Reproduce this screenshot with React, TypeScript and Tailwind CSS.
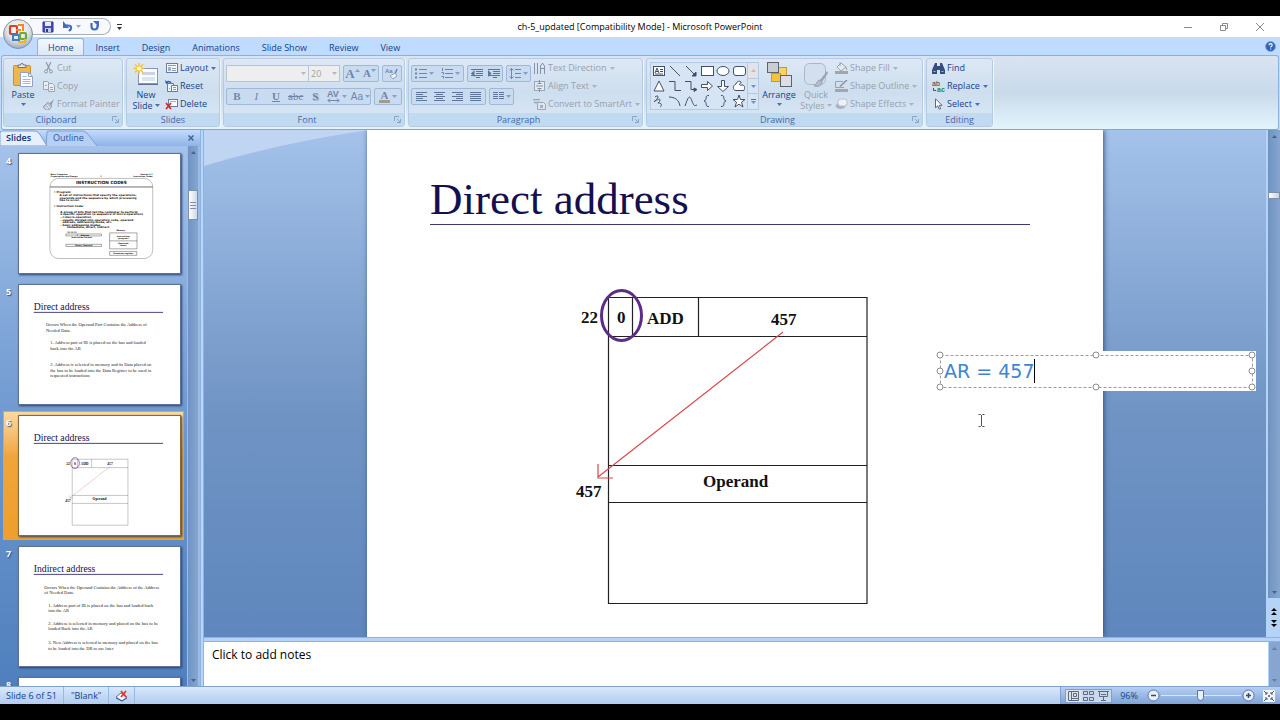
import type { ReactNode } from "react";
import clsx from "clsx";

const ui = "font-['Open_Sans','Noto_Sans',sans-serif]";

function Svg({ w, h, className, children }: { w: number; h: number; className?: string; children: ReactNode }) {
  return (
    <svg width={w} height={h} viewBox={`0 0 ${w} ${h}`} fill="none" className={clsx("shrink-0", className)} aria-hidden="true">
      {children}
    </svg>
  );
}

function Caret({ className }: { className?: string }) {
  return (
    <Svg w={5} h={3} className={clsx("opacity-70", className)}>
      <path d="M0 0h5L2.500 3z" fill="currentColor" />
    </Svg>
  );
}

/* ---------- title bar ---------- */

function OfficeButton() {
  return (
    <button aria-label="Office" className="absolute top-[2px] left-[2px] z-10 size-8">
      <Svg w={32} h={32}>
        <defs>
          <radialGradient id="orb" cx="50%" cy="35%" r="65%">
            <stop offset="0" stopColor="#ffffff" />
            <stop offset="0.6" stopColor="#dfe3ea" />
            <stop offset="1" stopColor="#9aa8bd" />
          </radialGradient>
        </defs>
        <circle cx="16" cy="16" r="14.500" fill="url(#orb)" stroke="#8493ab" />
        <rect x="8" y="8" width="7" height="8" rx="1" stroke="#d8431f" strokeWidth="2.200" />
        <path d="M16 7h5v6M14 12h5" stroke="#f08a24" strokeWidth="2" />
        <rect x="11" y="17" width="6" height="5" stroke="#3d7fc9" strokeWidth="2" />
        <rect x="18" y="15" width="6" height="6" rx="1" stroke="#6fa832" strokeWidth="2.200" />
        <path d="M16 24h7v-3" stroke="#f3b21b" strokeWidth="2" />
      </Svg>
    </button>
  );
}

function TitleBar() {
  return (
    <header className="grid h-[21px] grid-cols-[1fr_auto_1fr] items-center bg-white">
      <div className="flex items-center gap-[6px] pl-[30px] text-[#2a3a63]">
        <div className="flex h-[17px] items-center gap-2 rounded-r-full border border-l-0 border-[#a9adb5] bg-[#f7f9fc] pr-[10px] pl-3">
          <button aria-label="Save">
            <Svg w={12} h={12}>
              <path d="M1 1h10v10H1z" fill="#4250b5" stroke="#2c3590" />
              <path d="M3 1h6v4H3z" fill="#e6ecfa" />
              <path d="M3 7h6v4H3z" fill="#c2cbe8" />
              <path d="M4 8h2v3H4z" fill="#2c3590" />
            </Svg>
          </button>
          <button aria-label="Undo" className="flex items-center gap-[3px]">
            <Svg w={11} h={11}>
              <path d="M3 4.500h3c4 0 4 3 1 5.500" stroke="#3e6cc8" strokeWidth="2.200" />
              <path d="M1 0v7h6z" fill="#3e6cc8" />
            </Svg>
            <Caret className="text-[#6a86b8]" />
          </button>
          <button aria-label="Repeat">
            <Svg w={11} h={11}>
              <path d="M2.500 2v3.500a3 3 0 0 0 6 0V4" stroke="#3e6cc8" strokeWidth="2.200" />
              <path d="M4 0h6v6z" fill="#3e6cc8" />
            </Svg>
          </button>
        </div>
        <button aria-label="Customize Quick Access Toolbar">
          <Svg w={5} h={6}>
            <path d="M0 0h5v1H0zM0 3h5L2.500 6z" fill="#333" />
          </Svg>
        </button>
      </div>
      <h1 className="text-[9px] text-black">ch-5_updated [Compatibility Mode] - Microsoft PowerPoint</h1>
      <div className="flex items-center justify-end gap-[26px] pr-[15px] text-[#8a8a8a]">
        <button aria-label="Minimize">
          <Svg w={10} h={10}>
            <path d="M1 5.500h8" stroke="currentColor" />
          </Svg>
        </button>
        <button aria-label="Restore">
          <Svg w={10} h={10}>
            <path d="M1.500 3.500h5v5h-5zM3.500 3V1.500h5v5H7" stroke="currentColor" />
          </Svg>
        </button>
        <button aria-label="Close">
          <Svg w={10} h={10}>
            <path d="M1 1l8 8M9 1L1 9" stroke="currentColor" />
          </Svg>
        </button>
      </div>
    </header>
  );
}

const tabs = ["Home", "Insert", "Design", "Animations", "Slide Show", "Review", "View"];

function RibbonTabs() {
  return (
    <nav className="flex h-[18px] items-end bg-[#bfdbff] pr-1 pl-[37px] text-[9px] text-[#15428b]">
      {tabs.map((tab, i) => (
        <button
          key={tab}
          className={clsx(
            "h-[17px] rounded-t-[3px] border border-b-0 px-[10px] leading-[17px]",
            i === 0 ? "border-[#8db2e3] bg-linear-to-b from-[#f4f9ff] to-[#dce8f6]" : "border-transparent",
          )}
        >
          {tab}
        </button>
      ))}
      <button aria-label="Help" className="ml-auto self-center">
        <Svg w={11} h={11}>
          <circle cx="5.500" cy="5.500" r="5" fill="#2f62b5" stroke="#86a8dc" />
          <path d="M4 4.200c0-2 3.200-2 3.200 0 0 1.100-1.500 1-1.500 2.200M5.700 7.500v1" stroke="#fff" strokeWidth="1.200" />
        </Svg>
      </button>
    </nav>
  );
}

/* ---------- ribbon ---------- */

function Group({ label, launcher, className, children }: { label: string; launcher?: boolean; className?: string; children: ReactNode }) {
  return (
    <section
      aria-label={label}
      className={clsx(
        "flex h-[69px] shrink-0 flex-col overflow-hidden rounded-[3px] border border-[#b5cbe3] bg-linear-to-b from-[#dde8f5] via-[#cddeee] to-[#dbe9f8] shadow-[1px_0_0_#eef5fd]",
        className,
      )}
    >
      <div className="flex h-[54px]">{children}</div>
      <div className={clsx("relative flex-1 bg-[#c1d9f1] text-center text-[9px] leading-[13px] text-[#3e6aaa]", launcher && "pr-[14px]")}>
        {label}
        {launcher && (
          <button aria-label={`${label} options`} className="absolute top-[3px] right-[3px] text-[#8ba5c8]">
            <Svg w={7} h={7}>
              <path d="M.5 5V.5H5M3 3l3 3M6.500 3v3.500H3" stroke="currentColor" />
            </Svg>
          </button>
        )}
      </div>
    </section>
  );
}

function BigButton({ icon, lines, caret, disabled, className }: { icon: ReactNode; lines: string[]; caret: "below" | "inline"; disabled?: boolean; className?: string }) {
  return (
    <button
      disabled={disabled}
      className={clsx("flex shrink-0 flex-col items-center pt-[3px] text-[9px] leading-[11px]", disabled ? "text-[#98a1ac]" : "text-[#15428b]", className)}
    >
      <span className="mb-px flex h-[26px] items-center">{icon}</span>
      {lines.map((line, i) => (
        <span key={line} className="flex items-center gap-[2px]">
          {line}
          {caret === "inline" && i === lines.length - 1 && <Caret />}
        </span>
      ))}
      {caret === "below" && <Caret className="mt-[3px]" />}
    </button>
  );
}

function RowButton({ icon, label, caret, disabled }: { icon: ReactNode; label: string; caret?: boolean; disabled?: boolean }) {
  return (
    <button
      disabled={disabled}
      className={clsx("flex h-[18px] items-center gap-[2px] text-[9px] whitespace-nowrap", disabled ? "text-[#98a1ac]" : "text-[#15428b]")}
    >
      <span className="flex w-[13px] shrink-0 justify-center">{icon}</span>
      {label}
      {caret && <Caret className="ml-px" />}
    </button>
  );
}

function Rows({ className, children }: { className?: string; children: ReactNode }) {
  return <div className={clsx("flex flex-col items-start", className)}>{children}</div>;
}

function Tools({ className, children }: { className?: string; children: ReactNode }) {
  return (
    <div className={clsx("flex h-[17px] items-center justify-around rounded-[2px] border border-[#9fb8d8] bg-[#c9dbf0] text-[#7186a6]", className)}>
      {children}
    </div>
  );
}

function Tool({ label, children }: { label: string; children: ReactNode }) {
  return (
    <button disabled aria-label={label} className="flex h-full flex-1 items-center justify-center gap-[2px] font-['Liberation_Serif',serif] text-[11px] leading-none font-bold">
      {children}
    </button>
  );
}

function ClipboardGroup() {
  return (
    <Group label="Clipboard" launcher className="w-[120px]">
      <BigButton
        className="w-[38px]"
        lines={["Paste"]}
        caret="below"
        icon={
          <Svg w={22} h={26}>
            <rect x="1.500" y="3.500" width="17" height="20" rx="1" fill="#f0b64c" stroke="#c98f2e" />
            <path d="M6 5.500V3h2.500a1.500 1.500 0 0 1 3 0H14v2.500z" fill="#e3e6ea" stroke="#6d7480" />
            <path d="M8.500 10.500h8l4 4v10h-12z" fill="#fdfdff" stroke="#8fa3c4" />
            <path d="M16.500 10.500v4h4" stroke="#8fa3c4" />
            <path d="M10.500 14.500h4M10.500 17.500h8M10.500 19.500h8M10.500 21.500h8" stroke="#a9b7cf" />
          </Svg>
        }
      />
      <Rows>
        <RowButton
          disabled
          label="Cut"
          icon={
            <Svg w={9} h={12}>
              <path d="M2 0l4 8M7 0L3 8" stroke="#8d99a8" strokeWidth="1.200" />
              <circle cx="2" cy="9.500" r="1.500" stroke="#8d99a8" />
              <circle cx="7" cy="9.500" r="1.500" stroke="#8d99a8" />
            </Svg>
          }
        />
        <RowButton
          disabled
          label="Copy"
          icon={
            <Svg w={12} h={11}>
              <path d="M.5.5h4l2 2v6h-6z" fill="#e9eef5" stroke="#9aa6b6" />
              <path d="M5.500 2.500h4l2 2v6h-6z" fill="#e9eef5" stroke="#9aa6b6" />
              <path d="M7 6.500h3M7 8.500h3M2 4.500h2" stroke="#9aa6b6" />
            </Svg>
          }
        />
        <RowButton
          disabled
          label="Format Painter"
          icon={
            <Svg w={12} h={11}>
              <path d="M11 0L6 5l2 2z" fill="#8b97a6" />
              <path d="M5 3l4 4-3 4H3L0 8z" fill="#b9c3cf" stroke="#98a4b3" />
              <path d="M2 8l3 2M4 6l3 3" stroke="#eef2f7" />
            </Svg>
          }
        />
      </Rows>
    </Group>
  );
}

function SlidesGroup() {
  return (
    <Group label="Slides" className="w-[94px]">
      <BigButton
        className="w-[38px]"
        lines={["New", "Slide"]}
        caret="inline"
        icon={
          <Svg w={26} h={24}>
            <rect x="5.500" y="5.500" width="19" height="15" fill="#f9fbff" stroke="#8796b0" />
            <path d="M5 21.500h20" stroke="#5c6f92" />
            <rect x="9" y="9" width="13" height="3" fill="#c9d4e6" />
            <rect x="9" y="14" width="13" height="4" fill="#dbe4f1" />
            <path d="M6 0v11M.5 5.500h11M2 1.500l8 8M10 1.500l-8 8" stroke="#f6c31f" strokeWidth="1.500" />
            <circle cx="6" cy="5.500" r="2" fill="#fffbe0" />
          </Svg>
        }
      />
      <Rows>
        <RowButton
          caret
          label="Layout"
          icon={
            <Svg w={12} h={10}>
              <rect x=".5" y=".5" width="11" height="9" fill="#f4f7fc" stroke="#6b7c9a" />
              <path d="M2 2.500h8" stroke="#8c9ab2" />
              <path d="M2 4h3v4H2z" fill="#9fb0cc" />
              <path d="M6 5.500h4M6 7.500h4" stroke="#8c9ab2" />
            </Svg>
          }
        />
        <RowButton
          label="Reset"
          icon={
            <Svg w={13} h={12}>
              <path d="M2.500 3.500h6v8h-6z" fill="#eef3fb" stroke="#6b7c9a" />
              <path d="M6.500 5.500h6v6h-6z" fill="#f7faff" stroke="#6b7c9a" />
              <path d="M8 7.500h3M8 9.500h3M4 8.500h1" stroke="#8c9ab2" />
              <path d="M1 3c1-2 4-2 5 0" stroke="#3461b4" strokeWidth="1.500" />
              <path d="M0 0l1 4 3-1z" fill="#3461b4" />
            </Svg>
          }
        />
        <RowButton
          label="Delete"
          icon={
            <Svg w={13} h={11}>
              <rect x="3.500" y=".5" width="9" height="7" fill="#f7faff" stroke="#6b7c9a" />
              <path d="M5 2.500h6" stroke="#a4b1c8" />
              <path d="M1 4l5 6M6 4l-5 6" stroke="#d8281d" strokeWidth="1.700" />
            </Svg>
          }
        />
      </Rows>
    </Group>
  );
}

function FontGroup() {
  return (
    <Group label="Font" launcher className="w-[182px]">
      <div className="flex flex-1 flex-col gap-[6px] px-[2px] pt-[6px]">
        <div className="flex gap-[3px]">
          <div className="flex flex-1">
            <div className="relative w-[83px]">
              <select disabled aria-label="Font name" className="block h-[17px] w-full appearance-none border border-[#b9c4d2] bg-[#eeeeee] opacity-100" />
              <Caret className="absolute top-[7px] right-[3px] text-[#a2a2a2]" />
            </div>
            <div className="relative flex-1">
              <select disabled aria-label="Font size" className="block h-[17px] w-full appearance-none border border-l-0 border-[#b9c4d2] bg-[#eeeeee] pl-[2px] text-[9px] text-[#a2a2a2] opacity-100">
                <option>20</option>
              </select>
              <Caret className="absolute top-[7px] right-[3px] text-[#a2a2a2]" />
            </div>
          </div>
          <Tools className="w-9">
            <Tool label="Grow Font">
              <span className="text-[13px]">A</span>
              <Caret className="-mt-[7px] -ml-[2px] rotate-180" />
            </Tool>
            <Tool label="Shrink Font">
              A<Caret className="-mt-[7px] -ml-[2px]" />
            </Tool>
          </Tools>
          <Tools className="w-5">
            <Tool label="Clear Formatting">
              <Svg w={14} h={13}>
                <text x="0" y="6" fontSize="6" fontFamily="Liberation Sans, sans-serif" fill="#7186a6">Aa</text>
                <path d="M12 2l-2 5" stroke="#7186a6" strokeWidth="1.500" />
                <path d="M5 9l5-3 2 3-4 3z" fill="#eef3fa" stroke="#8ea0bc" />
              </Svg>
            </Tool>
          </Tools>
        </div>
        <div className="flex gap-[3px]">
          <Tools className="flex-1">
            <Tool label="Bold">B</Tool>
            <Tool label="Italic"><i className="font-normal">I</i></Tool>
            <Tool label="Underline"><span className="underline">U</span></Tool>
            <Tool label="Strikethrough"><span className="font-normal line-through">abc</span></Tool>
            <Tool label="Shadow"><span className="[text-shadow:1px_1px_1px_#8fa1bd]">S</span></Tool>
            <Tool label="Character Spacing">
              <Svg w={13} h={13}>
                <text x="0" y="7" fontSize="9" fontFamily="Liberation Sans, sans-serif" fill="#7186a6">AV</text>
                <path d="M1 10.500h11M3 8.500l-2 2 2 2M10 8.500l2 2-2 2" stroke="#7186a6" />
              </Svg>
              <Caret className="-mr-[5px]" />
            </Tool>
            <Tool label="Change Case">
              <span className="ml-[6px] font-['Liberation_Sans',sans-serif] text-[10px] font-normal">Aa</span>
              <Caret />
            </Tool>
          </Tools>
          <Tools className="w-[28px]">
            <Tool label="Font Color">
              <span className="border-b-3 border-[#a39a94] px-[2px] leading-[9px]">A</span>
              <Caret />
            </Tool>
          </Tools>
        </div>
      </div>
    </Group>
  );
}

const alignments = [
  { label: "Align Left", d: "M0 1.500h11M0 3.500h7M0 5.500h11M0 7.500h7M0 9.500h11" },
  { label: "Center", d: "M0 1.500h11M2 3.500h7M0 5.500h11M2 7.500h7M0 9.500h11" },
  { label: "Align Right", d: "M0 1.500h11M4 3.500h7M0 5.500h11M4 7.500h7M0 9.500h11" },
  { label: "Justify", d: "M0 1.500h11M0 3.500h11M0 5.500h11M0 7.500h11M0 9.500h11" },
];

function ParagraphGroup() {
  return (
    <Group label="Paragraph" launcher className="w-[235px]">
      <div className="flex flex-col gap-[6px] pt-[6px] pl-[2px]">
        <div className="flex gap-[3px]">
          <Tools className="w-[53px]">
            <Tool label="Bullets">
              <Svg w={12} h={11}>
                <path d="M0 1.500h2M0 5.500h2M0 9.500h2" stroke="#7186a6" strokeWidth="2" />
                <path d="M4 1.500h8M4 5.500h8M4 9.500h8" stroke="#7186a6" />
              </Svg>
              <Caret />
            </Tool>
            <Tool label="Numbering">
              <Svg w={12} h={11}>
                <path d="M1.500 0v3M.5 4.500h2v2M.5 8.500h2v2" stroke="#7186a6" />
                <path d="M4 1.500h8M4 5.500h8M4 9.500h8" stroke="#7186a6" />
              </Svg>
              <Caret />
            </Tool>
          </Tools>
          <Tools className="w-[36px]">
            <Tool label="Decrease List Level">
              <Svg w={12} h={11}>
                <path d="M0 1.500h12M5 3.500h7M5 5.500h7M0 7.500h12M5 9.500h4" stroke="#5f7598" />
                <path d="M3.500 2v7L0 5.500z" fill="#5f7598" />
              </Svg>
            </Tool>
            <Tool label="Increase List Level">
              <Svg w={12} h={11}>
                <path d="M0 1.500h12M5 3.500h7M5 5.500h7M0 7.500h12M5 9.500h4" stroke="#5f7598" />
                <path d="M0 2v7l3.500-3.500z" fill="#5f7598" />
              </Svg>
            </Tool>
          </Tools>
          <Tools className="w-[25px]">
            <Tool label="Line Spacing">
              <Svg w={12} h={13}>
                <path d="M2.500 1v11M.5 3.500l2-2 2 2M.5 9.500l2 2 2-2" stroke="#7186a6" />
                <path d="M6 2.500h6M6 6.500h6M6 10.500h6" stroke="#7186a6" />
              </Svg>
              <Caret />
            </Tool>
          </Tools>
        </div>
        <div className="flex gap-[3px]">
          <Tools className="w-[75px]">
            {alignments.map((a) => (
              <Tool key={a.label} label={a.label}>
                <Svg w={11} h={11}>
                  <path d={a.d} stroke="#5f7598" />
                </Svg>
              </Tool>
            ))}
          </Tools>
          <Tools className="w-[25px]">
            <Tool label="Columns">
              <Svg w={11} h={9}>
                <path d="M0 .5h5M0 2.500h5M0 4.500h5M0 6.500h5M6 .5h5M6 2.500h5M6 4.500h5M6 6.500h5" stroke="#5f7598" />
              </Svg>
              <Caret />
            </Tool>
          </Tools>
        </div>
      </div>
      <Rows className="pl-[2px]">
        <RowButton
          disabled
          caret
          label="Text Direction"
          icon={
            <Svg w={13} h={13}>
              <path d="M1.500 1v11M4.500 1v11" stroke="#8592a5" />
              <path d="M7.500 12V4l2-3 2 3v8M7.500 6.500h4" stroke="#8592a5" />
            </Svg>
          }
        />
        <RowButton
          disabled
          caret
          label="Align Text"
          icon={
            <Svg w={13} h={12}>
              <rect x="1.500" y="1.500" width="10" height="9" fill="#e4eaf2" stroke="#9aa6b6" />
              <path d="M6.500 0v4M6.500 8v4M3 6h7" stroke="#8592a5" />
              <path d="M4.500 3.500h4M4.500 8.500h4" stroke="#8592a5" />
            </Svg>
          }
        />
        <RowButton
          disabled
          caret
          label="Convert to SmartArt"
          icon={
            <Svg w={13} h={11}>
              <path d="M0 .5h7M1 3.500h5l2 2.500" stroke="#9aa6b6" strokeWidth="1.500" />
              <path d="M4.500 3.500h6l2 2v5h-8z" fill="#dfe6ef" stroke="#9aa6b6" />
              <path d="M7 6h3v3H7z" fill="#a6b1c0" />
            </Svg>
          }
        />
      </Rows>
    </Group>
  );
}

const shapes: { label: string; body: ReactNode }[] = [
  { label: "Text Box", body: <><rect x="1.500" y="2.500" width="11" height="9" fill="#fff" /><path d="M3 9l2-5 2 5M4 7.500h2M8 5.500h3M8 7.500h3M3 10h8" /></> },
  { label: "Line", body: <path d="M2 2l10 10" /> },
  { label: "Arrow", body: <><path d="M2 2l9 9" /><path d="M12 12V8l-4 4z" fill="#40506e" /></> },
  { label: "Rectangle", body: <rect x="1.500" y="2.500" width="12" height="9" fill="#fff" /> },
  { label: "Oval", body: <ellipse cx="7" cy="7" rx="6" ry="4.500" fill="#fff" /> },
  { label: "Rounded Rectangle", body: <rect x="1.500" y="2.500" width="12" height="9" rx="2.500" fill="#fff" /> },
  { label: "Triangle", body: <path d="M7 2l5 10H2z" fill="#fff" /> },
  { label: "Elbow Connector", body: <path d="M1 2.500h6v9h6" /> },
  { label: "Elbow Arrow Connector", body: <><path d="M1 2.500h6v8h4" /><path d="M10 9l3 1.500-3 2z" fill="#40506e" /></> },
  { label: "Right Arrow", body: <path d="M1.500 5.500h6v-3l5 4.500-5 4.500v-3h-6z" fill="#fff" /> },
  { label: "Down Arrow", body: <path d="M5.500 1.500v6h-4l5.500 5 5.500-5h-4v-6z" fill="#fff" /> },
  { label: "Freeform", body: <path d="M4 11.500C0 11 1 6 4 5c1-4 6-3 5-1-3 1-1 3 1 2 3 0 3 3 2 5.500z" fill="#fff" /> },
  { label: "Scribble", body: <path d="M3 3c4-3 4 1 0 4s5-4 5-1-4 3-1 3 3 3 1 4" /> },
  { label: "Arc", body: <path d="M1 3c6 0 10 3 11 9" /> },
  { label: "Curve", body: <path d="M1 12C5 0 6 2 8 7s2 5 5 4" /> },
  { label: "Left Brace", body: <path d="M9 1.500C4 1 8 6 4 7c4 1 0 6 5 5.500" /> },
  { label: "Right Brace", body: <path d="M5 1.500C10 1 6 6 10 7c-4 1 0 6-5 5.500" /> },
  { label: "Star", body: <path d="M7 1l1.500 4.500H13L9.500 8.200 11 13 7 10.200 3 13l1.500-4.800L1 5.500h4.500z" fill="#fff" /> },
];

function DrawingGroup() {
  return (
    <Group label="Drawing" launcher className="w-[277px]">
      <div className="mt-[3px] ml-[3px] flex h-[48px] border border-[#b4c9e2] bg-[#d6e4f4]">
        <div className="grid w-[96px] grid-cols-6">
          {shapes.map((s) => (
            <button key={s.label} aria-label={s.label} className="flex h-[15px] items-center justify-center">
              <Svg w={14} h={14}>
                <g stroke="#40506e">{s.body}</g>
              </Svg>
            </button>
          ))}
        </div>
        <div className="flex w-[11px] flex-col divide-y divide-[#b4c9e2] border-l border-[#b4c9e2] text-[#4a6ea9]">
          <button aria-label="Scroll up" className="flex flex-1 items-center justify-center bg-[#e4e4e8] text-[#b0b0b0]"><Caret className="rotate-180" /></button>
          <button aria-label="Scroll down" className="flex flex-1 items-center justify-center"><Caret /></button>
          <button aria-label="More shapes" className="flex flex-1 flex-col items-center justify-center gap-px">
            <span className="h-px w-[5px] bg-current" />
            <Caret />
          </button>
        </div>
      </div>
      <BigButton
        className="w-[40px]"
        lines={["Arrange"]}
        caret="below"
        icon={
          <Svg w={25} h={26}>
            <rect x="8.500" y="5.500" width="11" height="10" fill="#f7d565" stroke="#c79d31" />
            <rect x="4.500" y="11.500" width="9" height="8" fill="#f5c43c" stroke="#c79d31" />
            <rect x=".5" y=".5" width="11" height="10" fill="#c9cdd4" stroke="#5d636e" />
            <rect x="13.500" y="13.500" width="11" height="11" fill="#dddfe4" stroke="#5d636e" />
          </Svg>
        }
      />
      <BigButton
        disabled
        className="w-[34px]"
        lines={["Quick", "Styles"]}
        caret="inline"
        icon={
          <Svg w={24} h={26}>
            <rect x=".5" y="1.500" width="21" height="21" rx="5" fill="#d3dfee" stroke="#a9b7c9" />
            <path d="M23 9l-7 9 2 2 6-9z" fill="#9aa5b3" />
            <path d="M16 18c-3 0-3 4-6 6 4 1 8 0 8-4z" fill="#b3bdc9" stroke="#94a0af" />
          </Svg>
        }
      />
      <Rows className="pl-[2px]">
        <RowButton
          disabled
          caret
          label="Shape Fill"
          icon={
            <Svg w={13} h={12}>
              <path d="M6 1l5 4-5 4-4-4z" fill="#e4eaf2" stroke="#98a4b3" />
              <path d="M11 5l1 3M5 0v4" stroke="#98a4b3" />
              <path d="M0 9h13v3H0z" fill="#a2a5aa" />
            </Svg>
          }
        />
        <RowButton
          disabled
          caret
          label="Shape Outline"
          icon={
            <Svg w={13} h={12}>
              <path d="M8 1.500H.5v6H9" stroke="#98a4b3" />
              <path d="M12 0L5 6.500" stroke="#8b97a6" strokeWidth="1.700" />
              <path d="M0 9h13v3H0z" fill="#a2a5aa" />
            </Svg>
          }
        />
        <RowButton
          disabled
          caret
          label="Shape Effects"
          icon={
            <Svg w={13} h={12}>
              <ellipse cx="5.500" cy="8" rx="5" ry="3" fill="#a9b3bf" />
              <rect x="3" y="1" width="9" height="7" rx="2.500" fill="#eef2f7" stroke="#b4bfcc" />
            </Svg>
          }
        />
      </Rows>
    </Group>
  );
}

function EditingGroup() {
  return (
    <Group label="Editing" className="w-[67px]">
      <Rows className="pl-[5px]">
        <RowButton
          label="Find"
          icon={
            <Svg w={13} h={11}>
              <path d="M3 0h2v3h3V0h2l3 7v4H8V7H5v4H0V7z" fill="#35507f" />
              <path d="M1.500 8.500h2M9.500 8.500h2" stroke="#a9bddc" />
            </Svg>
          }
        />
        <RowButton
          caret
          label="Replace"
          icon={
            <Svg w={13} h={13}>
              <text x="0" y="6" fontSize="7" fontFamily="Liberation Sans, sans-serif" fill="#333">ab</text>
              <text x="5" y="12" fontSize="7" fontWeight="700" fontFamily="Liberation Sans, sans-serif" fill="#2f8a3c">ac</text>
              <path d="M1.500 8v2.500H4" stroke="#35507f" />
            </Svg>
          }
        />
        <RowButton
          caret
          label="Select"
          icon={
            <Svg w={9} h={12}>
              <path d="M1.500.8v9l2.200-2 1.500 3.500 1.500-.7-1.500-3.300H8z" fill="#fff" stroke="#5b6880" />
            </Svg>
          }
        />
      </Rows>
    </Group>
  );
}

function Ribbon() {
  return (
    <div className="bg-[#bfdbff] px-px">
      <div className="flex h-[75px] gap-[3px] overflow-hidden rounded-[3px] border border-[#8db2d8] border-b-[#7fa9c8] bg-linear-to-b from-[#d9e4f2] via-[#c9daea] to-[#e2f5fc] px-px pt-[2px]">
        <ClipboardGroup />
        <SlidesGroup />
        <FontGroup />
        <ParagraphGroup />
        <DrawingGroup />
        <EditingGroup />
      </div>
    </div>
  );
}

/* ---------- slides ---------- */

// Drawn in slide units: a slide is 736 x 552.
function AddressDiagram() {
  return (
    <g fontFamily="Liberation Serif, serif" fontWeight="700" fontSize="17" fill="#111">
      <path
        d="M241.500 200.500H500v306H241.500zM241.500 239.500H500M265.500 200v39M331.500 200v39M241.500 368.500H500M241.500 405.500H500"
        fill="none"
        stroke="#222"
        strokeWidth="1.200"
      />
      <text x="214" y="226">22</text>
      <text x="250" y="226">0</text>
      <text x="280" y="227">ADD</text>
      <text x="404" y="228">457</text>
      <text x="336" y="390">Operand</text>
      <text x="209" y="400">457</text>
      <path d="M416 235L231 380M231 367v14h15" fill="none" stroke="#d8484c" strokeWidth="1.200" />
      <ellipse cx="254.500" cy="218.500" rx="20" ry="25" fill="none" stroke="#5c2d86" strokeWidth="3" />
    </g>
  );
}

type Line = [x: number, y: number, text: string];

function TextSlide({ title, lines }: { title: string; lines: Line[] }) {
  return (
    <g fontFamily="Liberation Serif, serif">
      <text x="63" y="114" fontSize="45" fill="#14104f">{title}</text>
      <path d="M63 127h600" stroke="#2b2870" strokeWidth="4" />
      {lines.map(([x, y, text]) => (
        <text key={y} x={x} y={y} fontSize="21" fill="#222">{text}</text>
      ))}
    </g>
  );
}

const directLines: Line[] = [
  [120, 191, "Occurs When the Operand Part Contains the Address of"],
  [120, 216, "Needed Data."],
  [140, 275, "1.  Address part of IR is placed on the bus and loaded"],
  [140, 300, "back into the AR"],
  [140, 378, "2.  Address is selected in memory and its Data placed on"],
  [140, 402, "the bus to be loaded into the Data Register to be used in"],
  [140, 428, "requested instructions"],
];

const indirectLines: Line[] = [
  [112, 195, "Occurs When the Operand Contains the Address of the Address"],
  [112, 220, "of Needed Data."],
  [130, 277, "1.  Address part of IR is placed on the bus and loaded back"],
  [130, 301, "into the AR"],
  [130, 360, "2.  Address is selected in memory and placed on the bus to be"],
  [130, 385, "loaded Back into the AR"],
  [130, 451, "3.  New Address is selected in memory and placed on the bus"],
  [130, 476, "to be loaded into the DR to use later"],
];

const codeLines: Line[] = [
  [156, 181, "• Program:"],
  [183, 194, "A set of instructions that specify the operations,"],
  [183, 207, "operands and the sequence by which processing"],
  [183, 219, "has to occur."],
  [156, 248, "• Instruction Code:"],
  [186, 272, "A group of bits that tell the computer to perform"],
  [186, 285, "a specific operation (a sequence of micro-operation)"],
  [186, 297, "-->macro-operation"],
  [186, 310, "- usually divided into operation code, operand"],
  [196, 321, "address, addressing mode, etc."],
  [186, 332, "- basic addressing modes"],
  [217, 343, "Immediate, direct, indirect"],
];

function CodesSlide() {
  return (
    <g fontFamily="DejaVu Sans, sans-serif" fontWeight="700" fontSize="13" fill="#111">
      <g fontSize="9">
        <text x="141" y="98">Basic Computer</text>
        <text x="141" y="108">Organization and Design</text>
        <text x="371" y="105">1</text>
        <text x="614" y="98" textAnchor="end">Section 5.1</text>
        <text x="614" y="108" textAnchor="end">Instruction Codes</text>
      </g>
      <rect x="138" y="113" width="477" height="372" rx="40" fill="none" stroke="#666" strokeWidth="2" />
      <path d="M138 153h477" stroke="#222" strokeWidth="3" />
      <text x="377" y="139" textAnchor="middle" fontSize="20">INSTRUCTION CODES</text>
      {codeLines.map(([x, y, text]) => (
        <text key={y} x={x} y={y}>{text}</text>
      ))}
      <g fill="none" stroke="#333" strokeWidth="2">
        <path d="M212 371h165v9H212zM265 371v9M212 419h165v10H212z" />
        <path d="M415 366h127v74H415zM415 403h127M415 452h126v18H415z" />
      </g>
      <g fontSize="9" textAnchor="middle">
        <text x="240" y="368">15 14 12</text>
        <text x="300" y="379">Address</text>
        <text x="285" y="391">Instruction Format</text>
        <text x="295" y="428">Binary Operand</text>
        <text x="467" y="356">Memory</text>
        <text x="478" y="383">Instructions</text>
        <text x="478" y="393">(program)</text>
        <text x="478" y="419">Operands</text>
        <text x="478" y="429">(data)</text>
        <text x="478" y="465">Processor register</text>
      </g>
    </g>
  );
}

const thumbs = [
  { n: 4, label: "Instruction Codes", body: <CodesSlide /> },
  { n: 5, label: "Direct address", body: <TextSlide title="Direct address" lines={directLines} /> },
  { n: 6, label: "Direct address", body: <><TextSlide title="Direct address" lines={[]} /><AddressDiagram /></>, selected: true },
  { n: 7, label: "Indirect address", body: <TextSlide title="Indirect address" lines={indirectLines} /> },
  { n: 8, label: "Next slide", body: null },
];

function ScrollButton({ up, label, className }: { up?: boolean; label: string; className?: string }) {
  return (
    <button aria-label={label} className={clsx("flex h-3 w-full shrink-0 items-center justify-center text-[#2f4a75]", className)}>
      <Caret className={clsx(up && "rotate-180")} />
    </button>
  );
}

function SlidesPane() {
  return (
    <aside className="flex w-[200px] shrink-0 flex-col">
      <div className="flex h-4 shrink-0 items-stretch bg-linear-to-b from-[#c3dcfb] to-[#8fb4e6] text-[9px] leading-[14px] text-[#15306e]">
        <div className="relative flex w-[97px]">
          <svg viewBox="0 0 100 16" className="absolute inset-0 h-4 w-[100px]" aria-hidden="true">
            <path d="M46 16L47 2q0-1 2-1h33q3 0 5 2l10 13" fill="#b4d0f4" stroke="#7fa0cf" />
            <path d="M0 16V3q0-2 2-2h32q3 0 5 2l8 13z" fill="#e6f0fd" stroke="#7fa0cf" />
          </svg>
          <button className="relative w-[47px] pr-2 pl-[6px] text-left font-semibold">Slides</button>
          <button className="relative pl-[6px] text-[#2f5596]">Outline</button>
        </div>
        <button aria-label="Close pane" className="mr-[6px] ml-auto text-[#3d639f]">
          <Svg w={6} h={6}>
            <path d="M.5.5l5 5M5.500.5l-5 5" stroke="currentColor" strokeWidth="1.500" />
          </Svg>
        </button>
      </div>
      <div className="flex min-h-0 flex-1 border-r border-[#9dbce4]">
        <ol className="flex min-w-0 flex-1 flex-col gap-[2px] overflow-hidden bg-linear-to-b from-[#a4c2ea] via-[#6f99d0] via-50% to-[#4f80bd] pt-[3px] pl-[3px]">
          {thumbs.map((t) => (
            <li
              key={t.n}
              className={clsx(
                "flex h-[129px] w-[181px] shrink-0 border py-[3px]",
                t.selected
                  ? "border-[#e8a33d] bg-linear-to-b from-[#fbd9a0] via-[#f0a53a] via-35% to-[#ee9f2c]"
                  : "border-transparent",
              )}
            >
              <span className="w-[14px] pt-px pl-[2px] text-[9px] font-bold text-white [text-shadow:1px_1px_1px_#33507f]">{t.n}</span>
              <button aria-label={`Slide ${t.n}: ${t.label}`} className="h-[121px] w-[163px] shadow-[1px_1px_2px_#27436f]">
                <svg viewBox="0 0 736 552" className={clsx("size-full border bg-white", t.selected ? "border-[#8a6a3a]" : "border-[#5d7296]")} aria-hidden="true">
                  {t.body}
                </svg>
              </button>
            </li>
          ))}
        </ol>
        <div className="flex w-3 shrink-0 flex-col border-x border-[#9dbce4] bg-linear-to-r from-[#6f93c4] to-[#86a6cf]">
          <ScrollButton up label="Scroll slides up" />
          <div className="mt-8 flex h-[30px] w-full flex-col items-center justify-center gap-[2px] border border-[#7d90ab] bg-linear-to-r from-white to-[#d0d9e6]">
            <span className="h-px w-[6px] bg-[#7d90ab]" />
            <span className="h-px w-[6px] bg-[#7d90ab]" />
            <span className="h-px w-[6px] bg-[#7d90ab]" />
          </div>
          <ScrollButton label="Scroll slides down" className="mt-auto" />
        </div>
      </div>
    </aside>
  );
}

const handles = [
  "top-0 left-0",
  "top-0 left-1/2",
  "top-0 left-full",
  "top-1/2 left-0",
  "top-1/2 left-full",
  "top-full left-0",
  "top-full left-1/2",
  "top-full left-full",
];

function AnnotationBox() {
  return (
    <div className="absolute top-[225px] left-[573px] flex h-8 w-[312px] items-center bg-white pl-1 shadow-[0_0_0_4px_white]">
      <svg className="absolute inset-0 size-full overflow-visible" aria-hidden="true">
        <rect x=".5" y=".5" width="100%" height="100%" fill="none" stroke="#9a9a9a" strokeDasharray="3 2" />
      </svg>
      <input
        aria-label="Text box"
        defaultValue="AR = 457"
        className="relative field-sizing-content font-['DejaVu_Sans',sans-serif] text-[19px] leading-6 text-[#3d85d0] outline-none"
      />
      <span className="relative h-6 w-px bg-black" />
      {handles.map((pos) => (
        <span key={pos} className={clsx("absolute size-[7px] -translate-1/2 rounded-full border border-[#8c8c8c] bg-white", pos)} />
      ))}
    </div>
  );
}

function Canvas() {
  return (
    <div className="flex min-h-0 flex-1">
      <div className="relative flex min-w-0 flex-1 justify-center overflow-hidden bg-linear-to-b from-[#a4c2ea] via-[#7094c4] via-55% to-[#5f87bd]">
        <svg viewBox="0 0 166 36" className="absolute top-0 left-0 h-9 w-[166px]" aria-hidden="true">
          <path d="M0 0h166Q80 12 0 36z" fill="#c0d5f1" />
        </svg>
        <article className="relative w-[736px] shrink-0 bg-white pt-[44px] pr-[73px] pl-[63px] shadow-[1px_0_5px_#35537f]">
          <h2 className="border-b border-[#3a3876] font-['Liberation_Serif',serif] text-[45px] leading-[50px] text-[#14104f]">Direct address</h2>
          <svg viewBox="200 180 310 340" className="mt-[52px] ml-[137px] h-[340px] w-[310px]" role="img" aria-label="Direct address diagram">
            <AddressDiagram />
          </svg>
          <AnnotationBox />
          <svg viewBox="0 0 7 13" className="absolute top-[284px] left-[611px] h-[13px] w-[7px]" fill="none" aria-hidden="true">
            <path d="M.5.5h2l1 1 1-1h2M3.500 1v11M.5 12.500h2l1-1 1 1h2" stroke="#555" />
          </svg>
        </article>
      </div>
      <div className="flex w-[14px] shrink-0 flex-col border-l-2 border-[#b5d2f7] bg-linear-to-r from-[#6f93c0] to-[#86a6cf]">
        <ScrollButton up label="Scroll up" />
        <div className="mt-[50px] h-[7px] border border-[#7d90ab] bg-linear-to-r from-white to-[#c8d2e0]" />
        <ScrollButton label="Scroll down" className="mt-auto" />
        <div className="flex h-[39px] flex-col items-center justify-center gap-[5px] bg-[#b5d2f7] text-black">
          <button aria-label="Previous Slide">
            <Svg w={6} h={7}><path d="M0 3h6L3 0zM0 7h6L3 4z" fill="currentColor" /></Svg>
          </button>
          <button aria-label="Next Slide">
            <Svg w={6} h={7}><path d="M0 0h6L3 3zM0 4h6L3 7z" fill="currentColor" /></Svg>
          </button>
        </div>
      </div>
    </div>
  );
}

function Notes() {
  return (
    <div className="flex h-[44px] shrink-0">
      <textarea
        aria-label="Notes"
        defaultValue="Click to add notes"
        className="min-w-0 flex-1 resize-none overflow-hidden bg-white px-2 pt-1 text-[12px] leading-[17px] text-black outline-none"
      />
      <div className="flex w-3 flex-col justify-between border-l border-[#b5d2f7] bg-[#86a6cf]">
        <ScrollButton up label="Scroll notes up" className="opacity-60" />
        <ScrollButton label="Scroll notes down" className="opacity-60" />
      </div>
    </div>
  );
}

const views = [
  { label: "Normal", d: "M.5.5h10v9H.5zM3.500.5v9M3.500 7.500h7M5.500 2.500h3v3h-3z" },
  { label: "Slide Sorter", d: "M.5.5h4v3h-4zM6.500.5h4v3h-4zM.5 6.500h4v3h-4zM6.500 6.500h4v3h-4z" },
  { label: "Slide Show", d: "M0 .5h11M1.500 1v4.500h8V1M5.500 6v3M3 9.500h5M3 3.500h5" },
];

function StatusBar() {
  return (
    <footer className="flex h-[18px] shrink-0 items-stretch border-t border-[#7f9fcd] bg-linear-to-b from-[#dbe9fb] via-[#c3d9f5] to-[#b4cdef] text-[9px] leading-[17px] text-[#15428b]">
      <span className="border-r border-[#9ab8e0] px-[6px]">Slide 6 of 51</span>
      <span className="border-r border-[#9ab8e0] px-[7px]">"Blank"</span>
      <button aria-label="Spelling" className="flex items-center border-r border-[#9ab8e0] px-[6px]">
        <Svg w={13} h={12}>
          <path d="M1 7l5-4 6 4-5 4z" fill="#f4f7fc" stroke="#5b77a8" />
          <path d="M1 8l6 3 5-3" stroke="#3d5c96" />
          <path d="M6 1l5 6M11 1L6 7" stroke="#e0362a" strokeWidth="1.700" />
        </Svg>
      </button>
      <div className="ml-auto flex items-center border-l border-[#7f9fcd] bg-linear-to-b from-[#b6d0f3] to-[#7fa3d6] pr-[5px] pl-1">
        <div className="flex h-[14px] border border-[#7f9fcd] bg-[#c9d9ee]">
          {views.map((v, i) => (
            <button key={v.label} aria-label={v.label} className={clsx("flex w-[15px] items-center justify-center", i === 0 && "bg-[#dfe3ea]")}>
              <Svg w={11} h={10}>
                <path d={v.d} stroke="#5d6a82" />
              </Svg>
            </button>
          ))}
        </div>
        <button className="w-[34px] text-center">96%</button>
        <button aria-label="Zoom out" className="ml-px">
          <Svg w={13} h={13}>
            <circle cx="6.500" cy="6.500" r="5.500" fill="#e8effa" stroke="#5874a3" />
            <path d="M4 6.500h5" stroke="#34496e" strokeWidth="1.500" />
          </Svg>
        </button>
        <input
          type="range"
          aria-label="Zoom"
          min={10}
          max={190}
          defaultValue={98}
          className="mx-px h-3 w-[80px] appearance-none bg-[linear-gradient(#dbe7f8,#dbe7f8)] bg-[length:100%_1px] bg-center bg-no-repeat [&::-webkit-slider-thumb]:h-[11px] [&::-webkit-slider-thumb]:w-[7px] [&::-webkit-slider-thumb]:appearance-none [&::-webkit-slider-thumb]:rounded-b-full [&::-webkit-slider-thumb]:border [&::-webkit-slider-thumb]:border-[#5874a3] [&::-webkit-slider-thumb]:bg-[#e8effa]"
        />
        <button aria-label="Zoom in">
          <Svg w={13} h={13}>
            <circle cx="6.500" cy="6.500" r="5.500" fill="#e8effa" stroke="#5874a3" />
            <path d="M4 6.500h5M6.500 4v5" stroke="#34496e" strokeWidth="1.500" />
          </Svg>
        </button>
        <button aria-label="Fit slide to window" className="ml-2">
          <Svg w={12} h={12}>
            <rect width="12" height="12" rx="1" fill="#f2f5fa" />
            <path d="M1 1l3 3M11 1L8 4M1 11l3-3M11 11L8 8M4 2v2H2M8 2v2h2M4 10V8H2M8 10V8h2" stroke="#4c5a72" />
            <path d="M5 5h2v2H5z" fill="#6f7c93" />
          </Svg>
        </button>
      </div>
    </footer>
  );
}

export default function App() {
  return (
    <div className={clsx("h-screen bg-black py-4", ui)}>
      <div className="relative flex h-full flex-col">
        <OfficeButton />
        <TitleBar />
        <RibbonTabs />
        <Ribbon />
        <main className="flex min-h-0 flex-1">
          <SlidesPane />
          <div className="w-1 shrink-0 border-x border-x-[#8fb2e0] bg-[#b5d6ff]" />
          <div className="flex min-w-0 flex-1 flex-col">
            <Canvas />
            <div className="h-[5px] shrink-0 border-y border-y-[#8fb2e0] bg-[#b5d2f7]" />
            <Notes />
          </div>
        </main>
        <StatusBar />
      </div>
    </div>
  );
}
